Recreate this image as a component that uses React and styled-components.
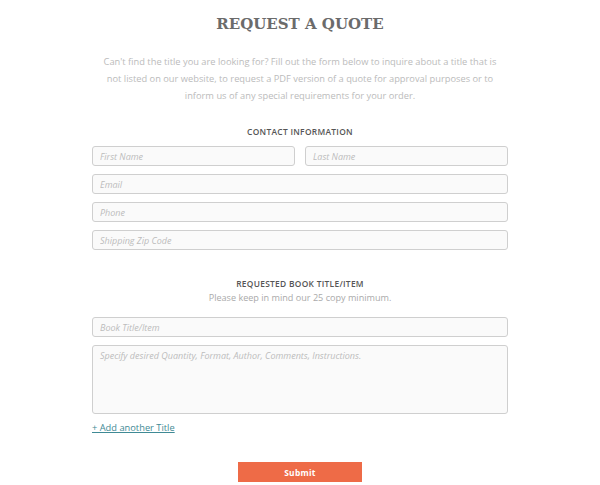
import React from "react";
import styled, { createGlobalStyle } from "styled-components";

const GlobalStyle = createGlobalStyle`
  html, body {
    margin: 0;
    padding: 0;
    background: #ffffff;
  }
  body {
    font-family: "Open Sans", "Liberation Sans", sans-serif;
  }
`;

const Page = styled.div`
  width: 600px;
  height: 485px;
  display: flex;
  flex-direction: column;
  align-items: center;
  overflow: hidden;
`;

const Title = styled.h1`
  margin: 14px 0 0;
  font-family: "DejaVu Serif", "Liberation Serif", serif;
  font-weight: bold;
  font-size: 15px;
  line-height: 20px;
  letter-spacing: 0;
  color: #6b6b6b;
`;

const Intro = styled.p`
  margin: 19px 0 0;
  width: 400px;
  text-align: center;
  font-size: 9.3px;
  line-height: 17px;
  color: #bbbbbb;
`;

const Form = styled.form`
  width: 416px;
  display: flex;
  flex-direction: column;
  gap: 8px;
`;

const SectionHead = styled.h2`
  margin: ${(p) => p.$top}px 0 0;
  text-align: center;
  font-size: 8.4px;
  font-weight: 600;
  line-height: 12px;
  letter-spacing: 0.3px;
  color: #555555;
`;

const Sub = styled.div`
  margin: 2px 0 0;
  text-align: center;
  font-size: 9.1px;
  line-height: 12px;
  color: #aaaaaa;
`;

const Row = styled.div`
  display: flex;
  gap: 10px;
  margin-top: ${(p) => p.$top || 0}px;
`;

const Field = styled.input`
  flex: 1;
  min-width: 0;
  box-sizing: border-box;
  height: 20px;
  padding: 0 7px;
  border: 1px solid #cfcfcf;
  border-radius: 3px;
  background: #fafafa;
  font-family: "Open Sans", "Liberation Sans", sans-serif;
  font-size: 9px;
  outline: none;
  &::placeholder {
    color: #bcbcbc;
    font-style: italic;
  }
`;

const Area = styled.textarea`
  box-sizing: border-box;
  width: 100%;
  height: 69px;
  padding: 3px 7px;
  border: 1px solid #cfcfcf;
  border-radius: 3px;
  background: #fafafa;
  font-family: "Open Sans", "Liberation Sans", sans-serif;
  font-size: 9px;
  line-height: 13px;
  resize: none;
  outline: none;
  &::placeholder {
    color: #bcbcbc;
    font-style: italic;
  }
`;

const AddLink = styled.a`
  align-self: flex-start;
  margin-top: 0;
  font-size: 9.3px;
  line-height: 12px;
  color: #3f8a95;
  text-decoration: underline;
  cursor: pointer;
`;

const Submit = styled.button`
  align-self: center;
  margin-top: 20px;
  width: 124px;
  height: 20px;
  border: none;
  background: #ee6b47;
  color: #ffffff;
  font-family: "Open Sans", "Liberation Sans", sans-serif;
  font-weight: bold;
  font-size: 8.4px;
  letter-spacing: 0.3px;
  cursor: pointer;
`;

export default function App() {
  return (
    <Page>
      <GlobalStyle />
      <Title>REQUEST A QUOTE</Title>
      <Intro>
        Can't find the title you are looking for? Fill out the form below to inquire about a title that is
        not listed on our website, to request a PDF version of a quote for approval purposes or to
        inform us of any special requirements for your order.
      </Intro>
      <Form onSubmit={(e) => e.preventDefault()}>
        <SectionHead $top={22}>CONTACT INFORMATION</SectionHead>
        <Row>
          <Field placeholder="First Name" />
          <Field placeholder="Last Name" />
        </Row>
        <Row>
          <Field placeholder="Email" />
        </Row>
        <Row>
          <Field placeholder="Phone" />
        </Row>
        <Row>
          <Field placeholder="Shipping Zip Code" />
        </Row>
        <div>
          <SectionHead $top={20}>REQUESTED BOOK TITLE/ITEM</SectionHead>
          <Sub>Please keep in mind our 25 copy minimum.</Sub>
        </div>
        <Row $top={5}>
          <Field placeholder="Book Title/Item" />
        </Row>
        <Area placeholder="Specify desired Quantity, Format, Author, Comments, Instructions." />
        <AddLink>+ Add another Title</AddLink>
        <Submit type="submit">Submit</Submit>
      </Form>
    </Page>
  );
}
